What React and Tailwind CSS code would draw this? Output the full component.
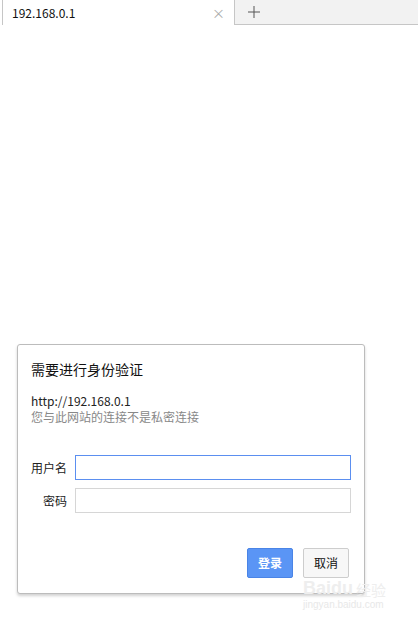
import React from "react";

const font = { fontFamily: '"Microsoft YaHei", "Noto Sans CJK SC", "Liberation Sans", sans-serif' };

export default function App() {
  return (
    <div className="relative w-[418px] h-[621px] bg-white overflow-hidden text-[#222]" style={font}>
      {/* tab strip */}
      <div className="flex h-[25px]">
        <div className="flex items-center w-[232px] ml-[2px] border-l border-[#c6c6c6] bg-white">
          <span className="ml-[9px] text-[12px] text-[#111] flex-1 leading-none">192.168.0.1</span>
          <span className="mr-[9px] text-[13px] text-[#aaa] leading-none">×</span>
        </div>
        <div className="flex-1 flex items-center bg-[#f2f2f2] border-l border-b border-[#c6c6c6]">
          <svg width="14" height="14" viewBox="0 0 14 14" className="ml-[12px]">
            <path d="M7 1v12M1 7h12" stroke="#555" strokeWidth="1" />
          </svg>
        </div>
      </div>

      {/* auth dialog */}
      <div className="absolute left-[17px] top-[344px] w-[348px] h-[250px] border border-[#bcbcbc] rounded-[3px] bg-white shadow-[0_2px_3px_rgba(0,0,0,0.18)]">
        <div className="pl-[13px] pt-[15px]">
          <div className="text-[14px] leading-[18px] text-[#111]">需要进行身份验证</div>
          <div className="mt-[15px] text-[12px] leading-[16px] text-[#222]">http://192.168.0.1</div>
          <div className="text-[12px] leading-[16px] text-[#888]">您与此网站的连接不是私密连接</div>
        </div>

        <div className="mt-[30px] flex flex-col gap-[8px]">
          <div className="flex items-center">
            <label className="w-[49px] text-right text-[12px] text-[#222]">用户名</label>
            <input className="ml-[8px] w-[276px] h-[25px] border border-[#5b8ff0] outline-none" />
          </div>
          <div className="flex items-center">
            <label className="w-[49px] text-right text-[12px] text-[#222]">密码</label>
            <input type="password" className="ml-[8px] w-[276px] h-[25px] border border-[#d6d6d6] outline-none" />
          </div>
        </div>

        <div className="flex justify-end gap-[10px] mt-[35px] pr-[15px]">
          <button className="w-[46px] h-[30px] rounded-[2px] bg-[#5a95f5] border border-[#4a84e6] text-white text-[12px] font-bold">
            登录
          </button>
          <button className="w-[46px] h-[30px] rounded-[2px] bg-[#f7f7f7] border border-[#cdcdcd] text-[#111] text-[12px]">
            取消
          </button>
        </div>
      </div>

      {/* watermark */}
      <div className="absolute left-[303px] top-[579px] leading-none pointer-events-none select-none">
        <div className="flex items-end text-[18px] font-bold text-[#eeeeee]" style={{ fontFamily: '"Liberation Sans", sans-serif' }}>
          Baidu<span className="ml-[3px] text-[15px] font-normal" style={font}>经验</span>
        </div>
        <div className="mt-[3px] text-[10px] text-[#e8e8e8]" style={{ fontFamily: '"Liberation Sans", sans-serif' }}>
          jingyan.baidu.com
        </div>
      </div>
    </div>
  );
}
